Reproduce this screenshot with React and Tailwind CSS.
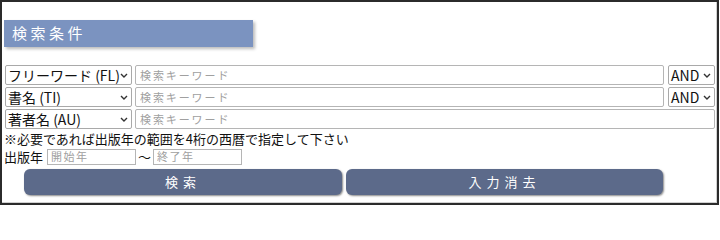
import React from 'react';

const font = { fontFamily: '"Noto Sans CJK JP", "Noto Sans", sans-serif' };

function Chevron() {
	return (
		<svg className="ml-auto shrink-0" width="8" height="5" viewBox="0 0 8 5">
			<path d="M1 1l3 3 3-3" fill="none" stroke="#333" strokeWidth="1.4" />
		</svg>
	);
}

function Select({ width, label }) {
	return (
		<div
			role="combobox"
			className={`box-border flex h-[20px] shrink-0 items-center rounded-[2px] border border-[#a9a9a9] bg-white pl-[2px] pr-[3px] text-[14px] leading-none whitespace-nowrap text-[#111] ${width}`}
		>
			<span>{label}</span>
			<Chevron />
		</div>
	);
}

function Keyword() {
	return (
		<input
			type="text"
			placeholder="検索キーワード"
			className="box-border h-[20px] min-w-0 flex-1 rounded-[2px] border border-[#b5b5b5] bg-white px-[4px] text-[11px] tracking-[1.9px] outline-none placeholder:text-[#a0a0a0]"
		/>
	);
}

export default function App() {
	return (
		<div className="h-[206px] w-[720px] bg-white" style={font}>
			<div className="box-border h-[205px] w-[719px] border-2 border-[#2b2b2b] shadow-[inset_-1px_-1px_0_#d0d0d0]">
				{/* 見出し */}
				<div className="ml-[2px] mt-[18px] flex h-[27px] w-[249px] items-center bg-[#7b93c0] pl-[8px] text-[15px] tracking-[3.5px] text-white shadow-[2px_2px_3px_#bbb]">
					検索条件
				</div>

				<div className="mt-[18px] flex flex-col gap-[2px] pl-[3px] pr-[2px]">
					<div className="flex gap-[3px]">
						<Select width="w-[127px]" label="フリーワード (FL)" />
						<Keyword />
						<Select width="w-[47px] ml-[1px]" label="AND" />
					</div>
					<div className="flex gap-[3px]">
						<Select width="w-[127px]" label="書名 (TI)" />
						<Keyword />
						<Select width="w-[47px] ml-[1px]" label="AND" />
					</div>
					<div className="flex gap-[3px]">
						<Select width="w-[127px]" label="著者名 (AU)" />
						<Keyword />
					</div>
				</div>

				<p className="ml-[2px] mt-[1px] text-[13px] leading-[18px] text-[#111]">※必要であれば出版年の範囲を4桁の西暦で指定して下さい</p>

				<div className="ml-[2px] flex h-[17px] items-center text-[13px] text-[#111]">
					<span className="mr-[4px]">出版年</span>
					<input placeholder="開始年" className="box-border h-[16px] w-[89px] border border-[#b5b5b5] px-[3px] text-[11px] tracking-[1.5px] outline-none placeholder:text-[#a0a0a0]" />
					<span className="mx-[2px]">〜</span>
					<input placeholder="終了年" className="box-border h-[16px] w-[89px] border border-[#b5b5b5] px-[3px] text-[11px] tracking-[1.5px] outline-none placeholder:text-[#a0a0a0]" />
				</div>

				<div className="ml-[22px] mt-[4px] flex gap-[4px]">
					<button className="h-[26px] w-[318px] rounded-[6px] bg-[#5c6a8a] text-[13px] tracking-[5px] text-white shadow-[1px_1px_2px_#8a8a8a]">
						検索
					</button>
					<button className="h-[26px] w-[317px] rounded-[6px] bg-[#5c6a8a] text-[13px] tracking-[5px] text-white shadow-[1px_1px_2px_#8a8a8a]">
						入力消去
					</button>
				</div>
			</div>
		</div>
	);
}
